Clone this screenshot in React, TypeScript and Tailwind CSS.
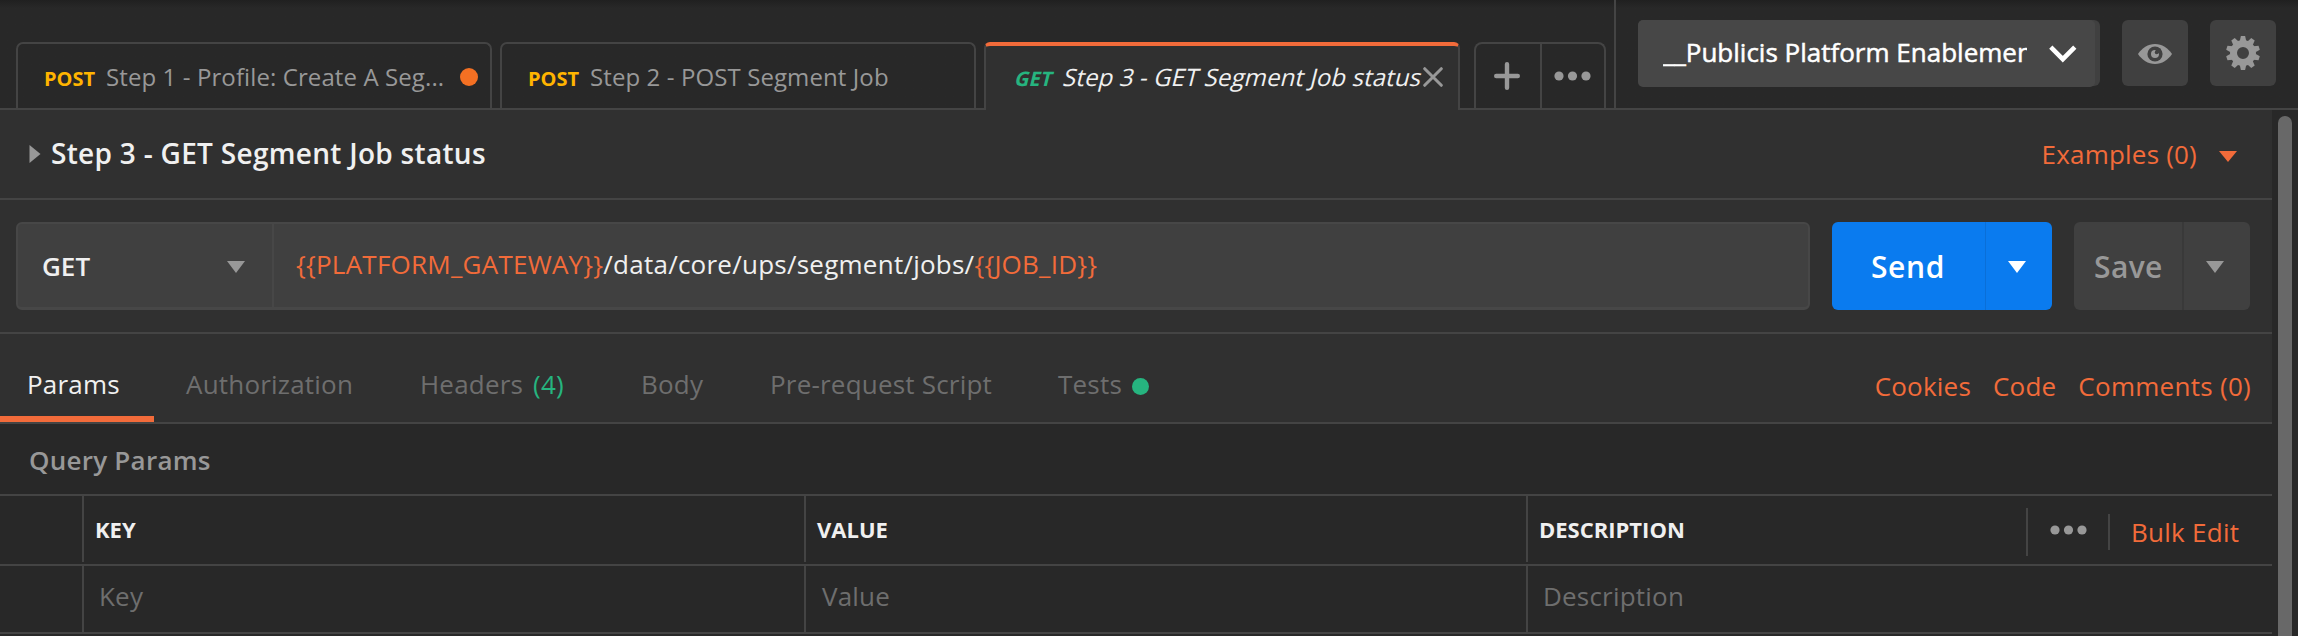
import type { ReactNode } from "react";

function Dots({ className }: { className: string }) {
  return (
    <svg viewBox="0 0 37 10" className={className} fill="#989898">
      <circle cx="5" cy="5" r="4.6" />
      <circle cx="18.5" cy="5" r="4.6" />
      <circle cx="32" cy="5" r="4.6" />
    </svg>
  );
}

function Caret({ className }: { className: string }) {
  return (
    <svg viewBox="0 0 18 12" className={className} preserveAspectRatio="none" fill="currentColor">
      <path d="M0 0H18L9 12Z" />
    </svg>
  );
}

function EyeIcon() {
  return (
    <svg viewBox="0 0 34 20" className="mt-[2px] h-[20px] w-[34px]">
      <path d="M0 10C4 4 10 0 17 0S30 4 34 10C30 16 24 20 17 20S4 16 0 10Z" fill="#989898" />
      <circle cx="17" cy="10" r="7.6" fill="#404040" />
      <circle cx="17" cy="10" r="4" fill="#989898" />
      <path d="M17.6 9.4V4.5H22.5V9.4Z" fill="#404040" />
      <circle cx="18.6" cy="8.4" r="1.8" fill="#404040" />
    </svg>
  );
}

function GearIcon() {
  const teeth = [0, 36, 72, 108, 144, 180, 216, 252, 288, 324];
  return (
    <svg viewBox="-17 -17 34 34" className="h-[34px] w-[34px]">
      <circle r="9.5" fill="none" stroke="#989898" strokeWidth="7" />
      {teeth.map((a) => (
        <path key={a} d="M-3.2 -12L-2.1 -17H2.1L3.2 -12Z" fill="#989898" transform={`rotate(${a})`} />
      ))}
    </svg>
  );
}

function Tab({ method, label, children }: { method: string; label: string; children?: ReactNode }) {
  return (
    <div className="flex h-[66px] w-[476px] rounded-t-[7px] border-2 border-b-0 border-[#444444] pl-[26px]">
      <span className="w-[62px] pt-[20px] text-[20px] leading-[30px] font-bold text-[#ffb400]">{method}</span>
      <span className="pt-[18px] text-[24px] leading-[30px] tracking-[0.1px] text-[#989898]">{label}</span>
      {children}
    </div>
  );
}

function TopBar() {
  return (
    <header className="flex h-[110px] shrink-0 border-b-2 border-[#444444] bg-linear-to-b from-[#202020] to-[#282828] to-[8px]">
      <div className="flex w-[1616px] items-end border-r-2 border-[#444444] pl-[16px]">
        <Tab method="POST" label="Step 1 - Profile: Create A Seg...">
          <span className="mt-[24px] ml-[16px] h-[18px] w-[18px] rounded-full bg-[#f47023]" />
        </Tab>
        <div className="ml-[8px]">
          <Tab method="POST" label="Step 2 - POST Segment Job" />
        </div>
        <div className="relative ml-[8px] -mb-[2px] flex h-[68px] w-[476px] rounded-t-[6px] border-x-2 border-t-4 border-x-[#444444] border-t-[#f26b3a] bg-[#303030] pl-[25px]">
          <span className="w-[48px] origin-[0_80%] -skew-x-[14deg] pt-[18px] text-[20px] leading-[30px] font-bold text-[#26b47f]">
            GET
          </span>
          <span className="w-[364px] origin-[0_80%] -skew-x-[14deg] pt-[16px] text-[24px] leading-[30px] tracking-[0.1px] whitespace-nowrap text-[#f0f0f0]">
            Step 3 - GET Segment Job status
          </span>
          <svg viewBox="0 0 20 20" className="mt-[21px] h-[20px] w-[20px]" stroke="#989898" strokeWidth="3" strokeLinecap="round">
            <path d="M1.7 1.7L18.3 18.3M18.3 1.7L1.7 18.3" />
          </svg>
        </div>
        <div className="ml-[14px] flex h-[66px] w-[132px] rounded-t-[8px] border-2 border-b-0 border-[#444444]">
          <div className="flex w-[66px] border-r-2 border-[#444444] pt-[18px] pl-[18px]">
            <svg viewBox="0 0 26 28" className="h-[28px] w-[26px]" stroke="#989898" strokeWidth="4.4" strokeLinecap="round">
              <path d="M2.2 14H23.8M13 2.2V25.8" />
            </svg>
          </div>
          <Dots className="mt-[27px] ml-[12px] h-[10px] w-[37px]" />
        </div>
      </div>
      <div className="flex pt-[20px] pl-[22px]">
        <div className="h-[66px] w-[462px] rounded-[6px] bg-[#404040]">
          <div className="flex h-[67px] w-[457px] rounded-[5px] bg-[#474747] pl-[25px]">
            <div className="w-[364px] overflow-hidden pt-[12px] text-[26px] leading-[40px] whitespace-nowrap text-white [-webkit-text-stroke:0.5px_white]">
              __Publicis Platform Enablement
            </div>
            <svg viewBox="0 0 28 18" className="mt-[25px] ml-[22px] h-[18px] w-[28px]" fill="none" stroke="#ffffff" strokeWidth="4.6">
              <path d="M1.8 2.2L13.8 14.2L25.8 2.2" />
            </svg>
          </div>
        </div>
        <button className="ml-[22px] flex h-[66px] w-[66px] items-center justify-center rounded-[6px] bg-[#404040]">
          <EyeIcon />
        </button>
        <button className="ml-[22px] flex h-[66px] w-[66px] items-center justify-center rounded-[6px] bg-[#404040]">
          <GearIcon />
        </button>
      </div>
    </header>
  );
}

function TitleRow() {
  return (
    <div className="flex h-[90px] border-b-2 border-[#444444]">
      <svg viewBox="0 0 11 18" className="mt-[35px] ml-[29px] h-[18px] w-[12px]" fill="#989898">
        <path d="M0 0L11 9L0 18Z" />
      </svg>
      <h1 className="ml-[10px] pt-[23px] text-[28px] leading-[40px] font-semibold tracking-[0.3px] text-[#f0f0f0]">
        Step 3 - GET Segment Job status
      </h1>
      <div className="ml-auto flex pr-[35px] text-[#f26b3a]">
        <span className="pt-[24px] text-[26px] leading-[40px] tracking-[0.2px]">Examples (0)</span>
        <Caret className="mt-[41px] ml-[22px] h-[11px] w-[18px]" />
      </div>
    </div>
  );
}

function UrlRow() {
  return (
    <div className="flex h-[134px] border-b-2 border-[#444444] pt-[22px] pl-[16px]">
      <div className="flex h-[88px] w-[1794px] overflow-hidden rounded-[6px] border-2 border-b-[3px] border-[#474747] bg-[#404040]">
        <div className="flex w-[256px] border-r-2 border-[#474747]">
          <span className="w-[209px] pt-[22px] pl-[24px] text-[26px] leading-[40px] font-semibold text-[#f0f0f0]">GET</span>
          <Caret className="mt-[37px] h-[12px] w-[18px] text-[#989898]" />
        </div>
        <div className="pt-[20px] pl-[22px] text-[26px] leading-[40px] tracking-[0.24px] text-[#f0f0f0]">
          <span className="text-[#f26b3a]">{"{{PLATFORM_GATEWAY}}"}</span>
          /data/core/ups/segment/jobs/
          <span className="text-[#f26b3a]">{"{{JOB_ID}}"}</span>
        </div>
      </div>
      <div className="ml-[22px] flex h-[88px] w-[220px] rounded-[6px] bg-[#0a7bef] text-white">
        <span className="w-[154px] border-r border-[#0a6fd8] pt-[25px] pl-[39px] text-[30px] leading-[40px] font-semibold tracking-[0.6px]">
          Send
        </span>
        <Caret className="mt-[39px] ml-[22px] h-[12px] w-[18px]" />
      </div>
      <div className="ml-[22px] flex h-[88px] w-[176px] rounded-[6px] bg-[#404040] text-[#989898]">
        <span className="w-[110px] border-r-2 border-[#393939] pt-[25px] pl-[20px] text-[30px] leading-[40px] font-semibold tracking-[0.4px]">
          Save
        </span>
        <Caret className="mt-[39px] ml-[22px] h-[12px] w-[18px]" />
      </div>
    </div>
  );
}

function SectionTabs() {
  return (
    <div className="flex h-[90px] border-b-2 border-[#444444] text-[26px] leading-[40px] tracking-[0.2px] text-[#6e6e6e]">
      <div className="w-[154px] border-b-[6px] border-[#f26b3a] pt-[30px] pl-[27px] text-[#f0f0f0]">Params</div>
      <div className="w-[233px] pt-[30px] pl-[32px]">Authorization</div>
      <div className="w-[221px] pt-[30px] pl-[33px]">
        Headers <span className="ml-[3px] text-[#26b47f]">(4)</span>
      </div>
      <div className="w-[128px] pt-[30px] pl-[33px]">Body</div>
      <div className="w-[288px] pt-[30px] pl-[34px]">Pre-request Script</div>
      <div className="flex pt-[30px] pl-[34px]">
        Tests
        <span className="mt-[14px] ml-[10px] h-[17px] w-[17px] rounded-full bg-[#26b47f]" />
      </div>
      <div className="ml-auto flex gap-[22px] pt-[32px] pr-[21px] text-[#f26b3a]">
        <span>Cookies</span>
        <span>Code</span>
        <span className="tracking-[0.28px]">Comments (0)</span>
      </div>
    </div>
  );
}

function ParamsTable() {
  return (
    <div className="flex grow flex-col bg-[#282828]">
      <div className="h-[72px] border-b-2 border-[#444444] pt-[16px] pl-[29px] text-[26px] leading-[40px] font-semibold tracking-[0.25px] text-[#989898]">
        Query Params
      </div>
      <div className="h-[70px] border-b-2 border-[#444444] text-[22px] leading-[40px] font-bold text-[#f0f0f0]">
        <div className="flex h-[66px]">
          <div className="w-[84px] border-r-2 border-[#444444]" />
          <div className="w-[722px] border-r-2 border-[#444444] pt-[13px] pl-[11px]">KEY</div>
          <div className="w-[722px] border-r-2 border-[#444444] pt-[13px] pl-[11px]">VALUE</div>
          <div className="w-[498px] pt-[13px] pl-[11px]">DESCRIPTION</div>
          <div className="mt-[12px] flex h-[48px] w-[82px] border-l-2 border-[#444444]">
            <Dots className="mt-[17px] ml-[22px] h-[10px] w-[37px]" />
          </div>
          <div className="mt-[18px] flex h-[36px] border-l-2 border-[#444444] pl-[21px] text-[26px] leading-[36px] font-normal tracking-[0.26px] text-[#f26b3a]">
            Bulk Edit
          </div>
        </div>
      </div>
      <div className="flex h-[68px] border-b-2 border-[#444444] text-[26px] leading-[40px] tracking-[0.2px] text-[#6e6e6e]">
        <div className="w-[84px] border-r-2 border-[#444444]" />
        <div className="w-[722px] border-r-2 border-[#444444] pt-[10px] pl-[15px]">Key</div>
        <div className="w-[722px] border-r-2 border-[#444444] pt-[10px] pl-[16px]">Value</div>
        <div className="pt-[10px] pl-[15px]">Description</div>
      </div>
    </div>
  );
}

export default function App() {
  return (
    <div className="flex h-[636px] w-[2298px] flex-col overflow-hidden bg-[#282828] font-['Open_Sans',sans-serif]">
      <TopBar />
      <div className="flex grow">
        <main className="flex w-[2272px] flex-col bg-[#303030]">
          <TitleRow />
          <UrlRow />
          <SectionTabs />
          <ParamsTable />
        </main>
        <div className="mt-[6px] ml-[6px] w-[14px] rounded-t-[7px] bg-[#686868]" />
      </div>
    </div>
  );
}
